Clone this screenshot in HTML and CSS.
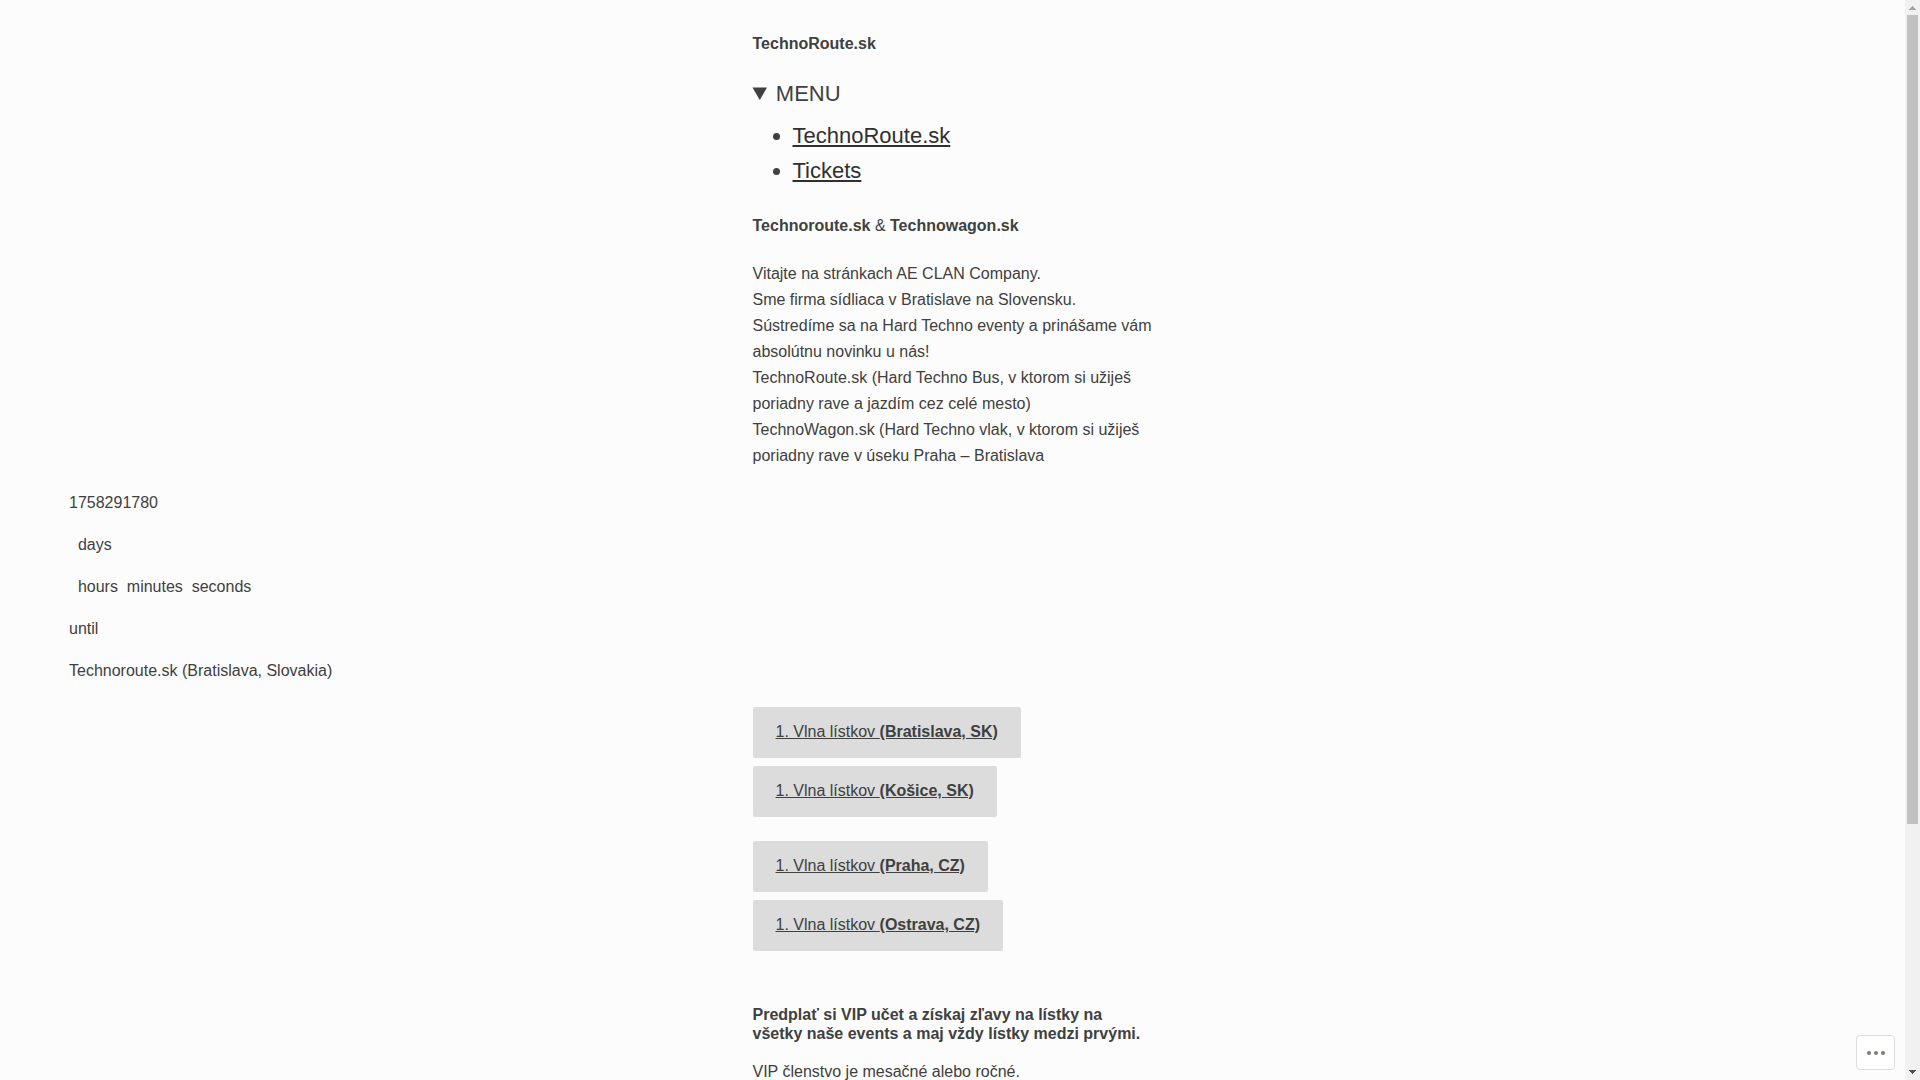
FILE: index.html
```
<!DOCTYPE html>
<html lang="sk">
<head>
    <meta charset="utf-8">
    <meta name="viewport" content="width=device-width, initial-scale=1">
    <title>TechnoRoute.sk</title>
    <link rel="stylesheet" href="styles.css">
</head>
<body>
    <div class="page">
        <header class="column">
            <p class="site-title">TechnoRoute.sk</p>
            <nav>
                <details class="menu" open>
                    <summary>MENU</summary>
                    <ul>
                        <li><a href="#">TechnoRoute.sk</a></li>
                        <li><a href="#tickets">Tickets</a></li>
                    </ul>
                </details>
            </nav>
        </header>

        <main>
            <div class="column intro">
                <p><strong>Technoroute.sk</strong> &amp; <strong>Technowagon.sk</strong></p>
                <p>Vitajte na stránkach AE CLAN Company.<br>
                Sme firma sídliaca v Bratislave na Slovensku.<br>
                Sústredíme sa na Hard Techno eventy a prinášame vám absolútnu novinku u nás!<br>
                TechnoRoute.sk (Hard Techno Bus, v ktorom si užiješ poriadny rave a jazdím cez celé mesto)<br>
                TechnoWagon.sk (Hard Techno vlak, v ktorom si užiješ poriadny rave v úseku Praha – Bratislava</p>
            </div>

            <div class="countdown">
                <p>1758291780</p>
                <p>&nbsp;&nbsp;days</p>
                <p>&nbsp;&nbsp;hours&nbsp;&nbsp;minutes&nbsp;&nbsp;seconds</p>
                <p>until</p>
                <p>Technoroute.sk (Bratislava, Slovakia)</p>
            </div>

            <div class="column tickets" id="tickets">
                <div class="buttons">
                    <a class="btn" href="#">1. Vlna lístkov <strong>(Bratislava, SK)</strong></a>
                    <a class="btn" href="#">1. Vlna lístkov <strong>(Košice, SK)</strong></a>
                </div>
                <div class="buttons">
                    <a class="btn" href="#">1. Vlna lístkov <strong>(Praha, CZ)</strong></a>
                    <a class="btn" href="#">1. Vlna lístkov <strong>(Ostrava, CZ)</strong></a>
                </div>
            </div>

            <div class="column vip">
                <h4>Predplať si VIP učet a získaj zľavy na lístky na všetky naše events a maj vždy lístky medzi prvými.</h4>
                <p>VIP členstvo je mesačné alebo ročné.</p>
            </div>
        </main>
    </div>

    <button class="more" type="button" aria-label="More">
        <svg width="18" height="4" viewBox="0 0 18 4"><circle cx="2" cy="2" r="2"/><circle cx="9" cy="2" r="2"/><circle cx="16" cy="2" r="2"/></svg>
    </button>

    <div class="scrollbar">
        <svg width="15" height="15" viewBox="0 0 15 15"><path fill="#a3a3a3" d="M7 6h1v1h1v1h1v1h1v1H4V9h1V8h1V7h1z"/></svg>
        <div class="track"><div class="thumb"></div></div>
        <svg width="15" height="15" viewBox="0 0 15 15"><path fill="#505050" d="M4 5h7v1h-1v1H9v1H8v1H7V8H6V7H5V6H4z"/></svg>
    </div>
</body>
</html>
```
FILE: styles.css
```
* {
    box-sizing: border-box;
}

body {
    display: flex;
    height: 100vh;
    margin: 0;
    overflow: hidden;
    background: #fcfcfc;
    color: #404040;
    font-family: "Liberation Sans", Arial, sans-serif;
    font-size: 16px;
    line-height: 26px;
}

p,
h4 {
    margin: 0;
}

.page {
    flex: 1;
    padding-top: 31px;
    overflow: hidden;
}

.column {
    max-width: 400px;
    margin: 0 auto;
}

.site-title {
    margin-bottom: 19px;
    font-weight: bold;
}

/* menu */
.menu {
    font-size: 22px;
    line-height: 35px;
}

.menu ul {
    margin: 7px 0 0;
    padding-left: 40px;
}

.menu a {
    color: #303030;
}

.intro {
    display: grid;
    gap: 22px;
    padding-top: 25px;
}

.countdown {
    display: grid;
    gap: 16px;
    padding: 21px 69px 0;
}

/* tickets */
.tickets {
    display: grid;
    gap: 24px;
    padding-top: 23px;
}

.buttons {
    display: flex;
    flex-direction: column;
    align-items: flex-start;
    gap: 8px;
}

.btn {
    padding: 12px 23px 13px;
    border-radius: 2px;
    background: #dcdcdc;
    color: #404040;
}

.vip {
    padding-top: 54px;
}

.vip h4 {
    margin-bottom: 16px;
    line-height: 19px;
}

.more {
    position: fixed;
    right: 25px;
    bottom: 10px;
    display: flex;
    align-items: center;
    justify-content: center;
    width: 39px;
    height: 35px;
    padding: 0;
    border: 1px solid #dcdcde;
    border-radius: 4px;
    background: #fff;
    fill: #787c82;
    cursor: pointer;
}

/* scrollbar */
.scrollbar {
    display: flex;
    flex-direction: column;
    width: 15px;
    background: #f1f1f1;
}

.track {
    flex: 1;
    padding: 0 2px;
}

.thumb {
    height: 77%;
    background: #c1c1c1;
}
```
